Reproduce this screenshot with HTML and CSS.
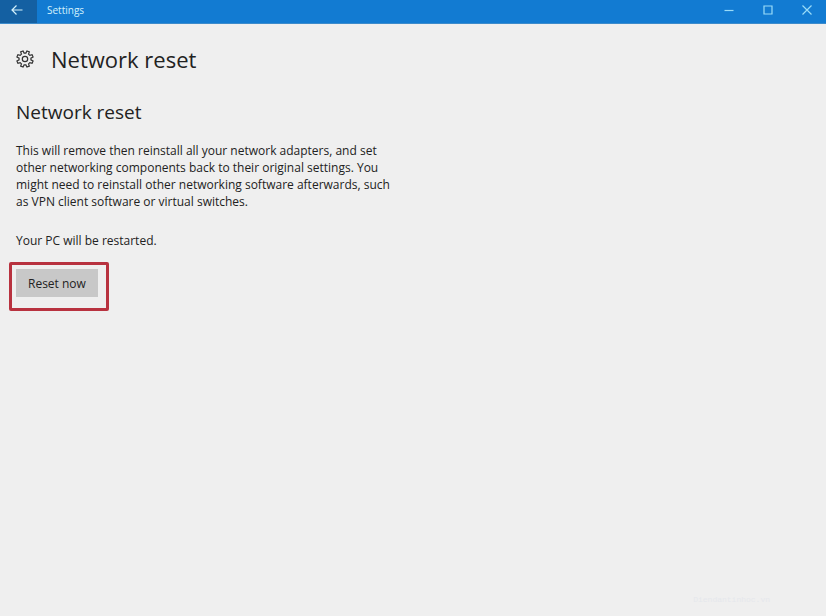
FILE: index.html
```html
<!DOCTYPE html>
<html lang="en">
<head>
  <meta charset="UTF-8">
  <meta name="viewport" content="width=device-width, initial-scale=1.0">
  <title>Settings</title>
  <link rel="stylesheet" href="styles.css">
</head>
<body>
  <!-- Title bar -->
  <header class="titlebar">
    <button class="back-button" aria-label="Back">
      <svg width="12" height="12" viewBox="0 0 12 12"><path d="M11.5 6H1M5.5 1.5L1 6l4.5 4.5"/></svg>
    </button>
    <span class="titlebar-text">Settings</span>
    <div class="window-buttons">
      <button aria-label="Minimize">
        <svg width="10" height="10" viewBox="0 0 10 10"><path d="M0.5 5.5h9"/></svg>
      </button>
      <button aria-label="Maximize">
        <svg width="10" height="10" viewBox="0 0 10 10"><path d="M1 1h8v8h-8z"/></svg>
      </button>
      <button aria-label="Close">
        <svg width="10" height="10" viewBox="0 0 10 10"><path d="M0.5 0.5l9 9M9.5 0.5l-9 9"/></svg>
      </button>
    </div>
  </header>

  <!-- Content -->
  <main class="content">
    <div class="page-header">
      <svg class="gear" width="18" height="18" viewBox="-9 -9 18 18">
        <path d="M5.93 .89L8.07 1.94 7.08 4.34 4.82 3.57 3.57 4.82 4.34 7.08 1.94 8.07 .89 5.93 -.89 5.93 -1.94 8.07 -4.34 7.08 -3.57 4.82 -4.82 3.57 -7.08 4.34 -8.07 1.94 -5.93 .89 -5.93 -.89 -8.07 -1.94 -7.08 -4.34 -4.82 -3.57 -3.57 -4.82 -4.34 -7.08 -1.94 -8.07 -.89 -5.93 .89 -5.93 1.94 -8.07 4.34 -7.08 3.57 -4.82 4.82 -3.57 7.08 -4.34 8.07 -1.94 5.93 -.89z"/>
        <circle r="2.7"/>
      </svg>
      <h1>Network reset</h1>
    </div>
    <h2>Network reset</h2>
    <p>This will remove then reinstall all your network adapters, and set other networking components back to their original settings. You might need to reinstall other networking software afterwards, such as VPN client software or virtual switches.</p>
    <p>Your PC will be restarted.</p>
    <div class="highlight">
      <button class="reset-button">Reset now</button>
    </div>
  </main>

  <footer class="watermark">Diendantinhoc.vn</footer>
</body>
</html>
```

FILE: styles.css
```css
body {
  margin: 0;
  min-height: 100vh;
  display: flex;
  flex-direction: column;
  background-color: #efefef;
  color: #222;
  font-family: "Open Sans", "Noto Sans", sans-serif;
  font-size: 12px;
}

button {
  border: none;
  border-radius: 0;
  padding: 0;
  background: none;
  font: inherit;
  color: inherit;
}

svg {
  fill: none;
  stroke: currentColor;
  stroke-width: 1.2;
}

/* Title bar */
.titlebar {
  display: flex;
  align-items: stretch;
  height: 23px;
  border-bottom: 1px solid #3c8bcb;
  background-color: #127bd2;
  color: #d3f1fc;
}

.titlebar button {
  display: flex;
  align-items: center;
  justify-content: center;
  padding-bottom: 3px;
}

.titlebar .back-button {
  width: 37px;
  padding-right: 4px;
  background-color: #1460a2;
}

.titlebar-text {
  margin-left: 10px;
  font-size: 10px;
  line-height: 20px;
}

.window-buttons {
  display: flex;
  margin-left: auto;
}

.window-buttons button {
  width: 39px;
  color: #9adcf8;
}

/* Content */
.content {
  padding: 18px 16px;
}

.page-header {
  display: flex;
  align-items: center;
  gap: 17px;
}

.gear {
  color: #333;
}

h1, h2 {
  margin: 0;
  font-weight: 400;
}

h1 {
  font-size: 22px;
  line-height: 34px;
}

h2 {
  margin: 22px 0 16px;
  font-size: 19px;
  line-height: 28px;
}

p {
  max-width: 384px;
  margin: 0;
  line-height: 17px;
}

p + p {
  margin-top: 22px;
}

/* Red frame around the reset button */
.highlight {
  width: fit-content;
  margin: 13px 0 0 -7px;
  padding: 4px 8px 11px 4px;
  border: 3px solid #b8323f;
  border-radius: 2px;
}

.reset-button {
  display: block;
  height: 28px;
  padding: 0 12px;
  background-color: #c8c8c8;
}

.watermark {
  margin-top: auto;
  padding: 0 56px 10px;
  font-family: "Liberation Mono", monospace;
  font-size: 8px;
  line-height: 12px;
  text-align: right;
  color: #e5e7ec;
}
```
